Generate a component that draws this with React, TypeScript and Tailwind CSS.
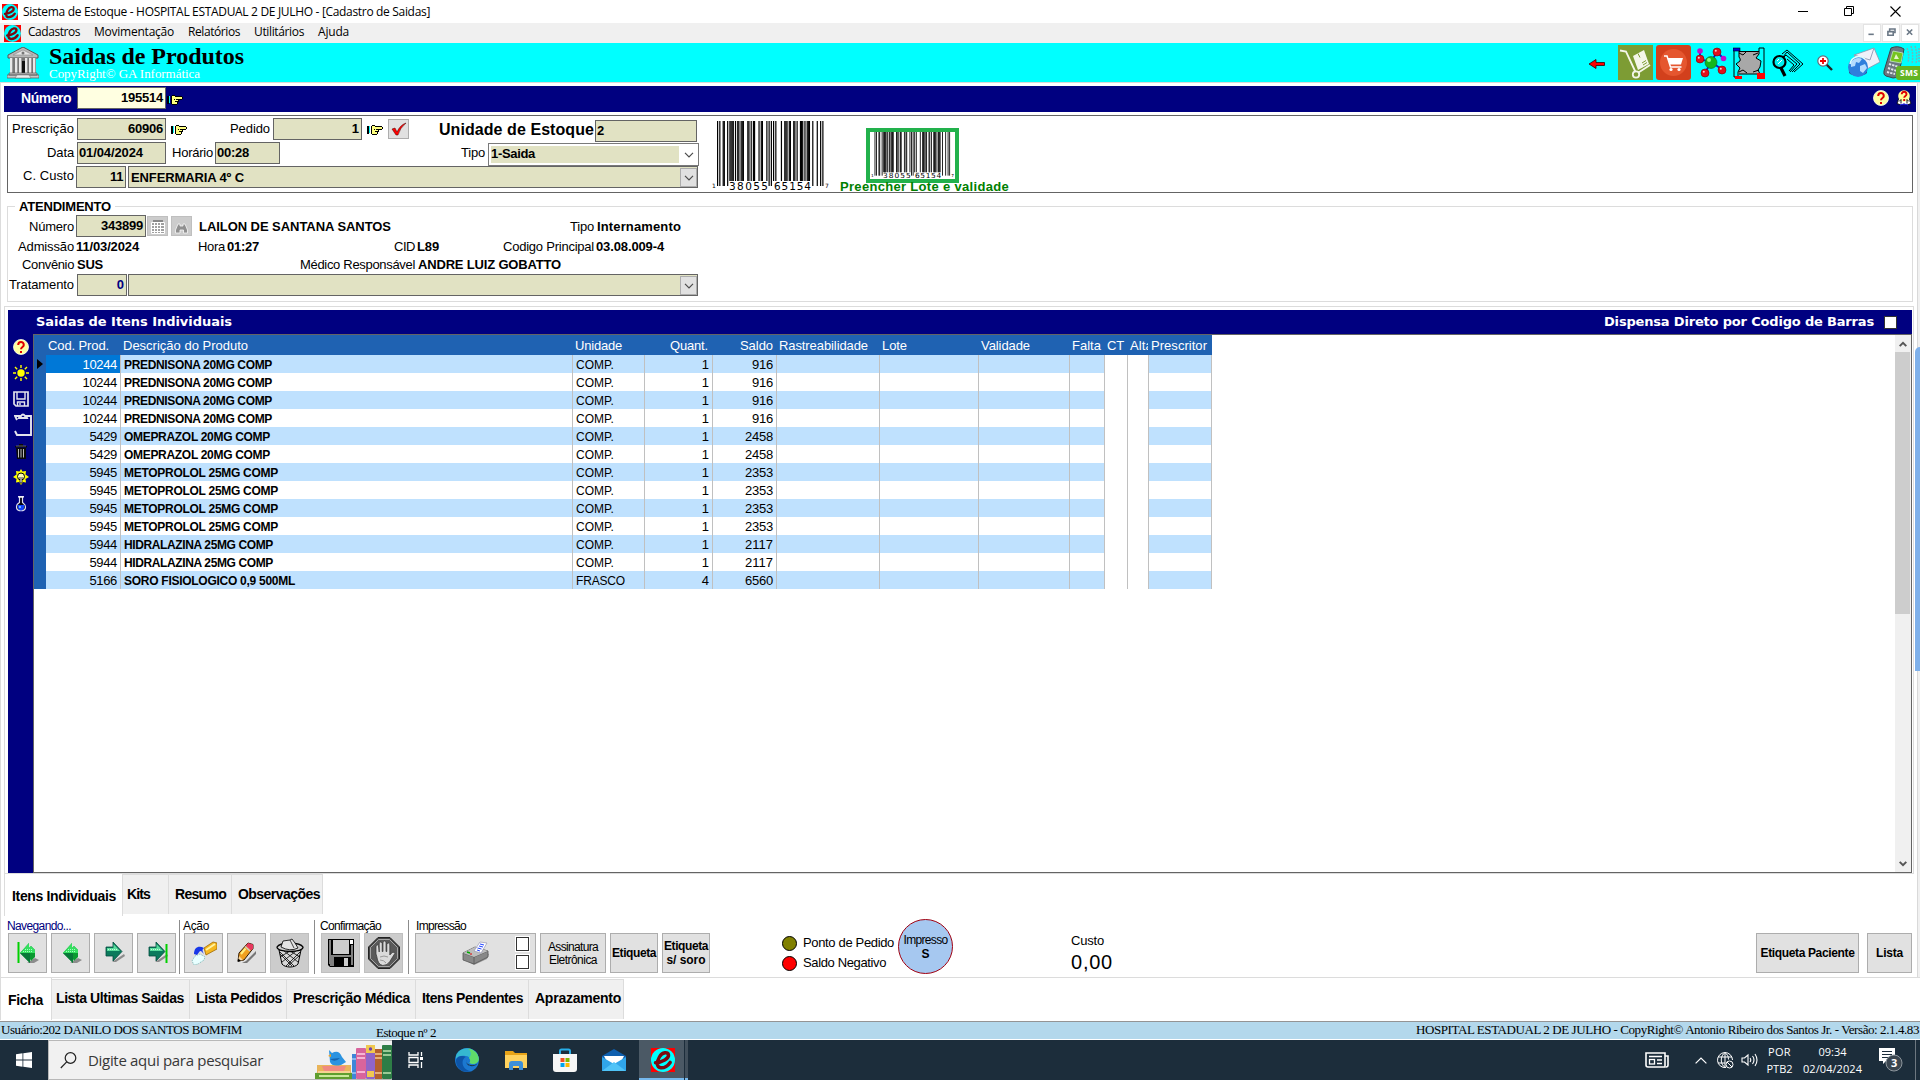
import React, { useLayoutEffect, useRef, useState } from "react";

type TProps = { w?: number; className?: string; children: string };

/** Single line of text whose letter spacing is adjusted so that it spans `w` pixels. */
function T({ w, className = "", children }: TProps) {
  const ref = useRef<HTMLSpanElement>(null);
  const [spacing, setSpacing] = useState(0);
  useLayoutEffect(() => {
    if (!w || !ref.current) return;
    const natural = ref.current.getBoundingClientRect().width;
    setSpacing((w - natural) / children.length);
  }, []);
  return (
    <span ref={ref} className={`inline-block shrink-0 whitespace-nowrap ${className}`} style={{ letterSpacing: spacing }}>
      {children}
    </span>
  );
}

/* ---------- icons ---------- */

function AppLogo({ className }: { className: string }) {
  return (
    <svg viewBox="0 0 16 16" className={`shrink-0 ${className}`}>
      <rect width="16" height="16" fill="#f00" />
      <circle cx="8" cy="8" r="8" fill="#0ff" />
      <path d="M3 9.800C7.600 9.400 12 7 11.700 4.600 11.400 2.400 7.600 2.600 5.600 6 3.600 9.400 3.600 13 6.600 13.200c2.200.1 4.600-1.300 6.200-3.600" fill="none" stroke="#7a0a10" strokeWidth="2.300" strokeLinecap="round" />
    </svg>
  );
}

function Hand({ className = "" }: { className?: string }) {
  return (
    <svg viewBox="0 0 16 10" className={`h-[10px] w-4 shrink-0 ${className}`} shapeRendering="crispEdges">
      <path d="M5 1h3v1h7v2h-4v4h-1v1H5z" fill="#ffff80" />
      <path d="M0 1h2v8H0zM4 1h1v8H4zM5 0h3v1H5zM8 1h7v1H8zM15 2h1v2h-1zM9 4h6v1H9zM11 5h1v2h-1zM10 7h1v2h-1zM5 9h5v1H5zM7 4h1v1H7zM8 6h3v1H8z" fill="#000" />
      <rect x="2" y="1" width="1" height="7" fill="#0ff" />
    </svg>
  );
}

function Bank() {
  return (
    <svg viewBox="0 0 32 32" className="h-8 w-8 shrink-0">
      <path d="M16 0 31 8v3H1V8z" fill="#b8b8b8" stroke="#555" />
      <path d="M16 3 26 8H6z" fill="#e6e6e6" stroke="#888" strokeWidth=".6" />
      <circle cx="16" cy="6" r="1.500" fill="#777" />
      <rect x="3" y="11" width="26" height="16" fill="#777" />
      <rect x="14" y="14" width="4" height="12" fill="#111" />
      {[3, 8, 12, 18, 22, 26].map((x) => (
        <g key={x}>
          <rect x={x} y="11" width="3" height="16" fill="#e8e8e8" />
          <rect x={x + 2} y="11" width="1" height="16" fill="#999" />
        </g>
      ))}
      <path d="M2 26h28v2H2zM0 28h32v3H0z" fill="#c9c9c9" stroke="#555" strokeWidth=".7" />
      <path d="M10 28h12l2 3H8z" fill="#eee" stroke="#666" strokeWidth=".5" />
    </svg>
  );
}

function HelpBall() {
  return (
    <svg viewBox="0 0 16 16" className="h-4 w-4 shrink-0">
      <circle cx="8" cy="8" r="7.500" fill="#ffffa0" stroke="#ffe" strokeWidth=".8" />
      <path d="M5.200 6c0-4 5.600-4 5.600 0 0 2-2.800 2-2.800 4.300M8 12v2" fill="none" stroke="#e00000" strokeWidth="2" />
    </svg>
  );
}

function HelpReader() {
  return (
    <svg viewBox="0 0 16 16" className="h-4 w-4 shrink-0">
      <path d="M1 13.500 3 8h10l2 5.500-4 1.500-3-1-3 1z" fill="#fff" stroke="#000" strokeWidth=".8" />
      <path d="M4 15l4-1 4 1" stroke="#22f" fill="none" />
      <circle cx="8" cy="6" r="5.800" fill="#ffff9a" />
      <path d="M3 11.500l2-2v4M13 11.500l-2-2v4" stroke="#000" fill="none" strokeWidth=".9" />
      <path d="M5.700 4.300c0-3.500 4.800-3.500 4.800 0 0 1.800-2.300 1.600-2.300 3.500M8.200 9v2" fill="none" stroke="#e00000" strokeWidth="1.900" />
    </svg>
  );
}

function Chevron({ className = "" }: { className?: string }) {
  return (
    <svg viewBox="0 0 10 6" className={`h-[6px] w-[10px] shrink-0 ${className}`}>
      <path d="M1 .8 5 4.800 9 .8" fill="none" stroke="#4c4c4c" strokeWidth="1.200" />
    </svg>
  );
}

function ScrollArrow({ className = "" }: { className?: string }) {
  return (
    <svg viewBox="0 0 8 6" className={`h-[6px] w-2 shrink-0 ${className}`}>
      <path d="M.7.9 4 4.200 7.300.9" fill="none" stroke="#555" strokeWidth="2" />
    </svg>
  );
}

function CyanIcons() {
  return (
    <div className="flex h-full items-center">
      <svg viewBox="0 0 16 10" className="mt-[2px] mr-[13px] h-[10px] w-4">
        <path d="M0 5 7 .5V3.500h8.500v3H7V9.500z" fill="#f00" stroke="#300" strokeWidth=".8" />
      </svg>
      <svg viewBox="0 0 35 35" className="mr-[3px] h-[35px] w-[35px]">
        <rect width="35" height="35" fill="#7d9c34" />
        <path d="M2 5.500l6 1 9.500 20.500" fill="none" stroke="#f4f6e8" strokeWidth="1.800" />
        <circle cx="18" cy="29.500" r="3.200" fill="none" stroke="#f4f6e8" strokeWidth="1.800" />
        <path d="M20.500 27.500 32 20" stroke="#f4f6e8" strokeWidth="1.800" />
        <path d="M15 11 26 5l5 14-11 6z" fill="#f4f6e8" />
        <path d="M20 8.500l2 4M24 18l4-2.500M25 20l4-2.500" stroke="#7d9c34" strokeWidth="1" />
      </svg>
      <svg viewBox="0 0 35 35" className="mr-[5px] h-[35px] w-[35px]">
        <rect width="35" height="35" rx="3" fill="#d2401c" />
        <circle cx="17.500" cy="17.500" r="13.500" fill="#e5562f" />
        <path d="M8 11h3l3.500 11h11" fill="none" stroke="#fff" strokeWidth="1.500" />
        <path d="M11.500 13H27l-2 6.500H14z" fill="#fff" />
        <circle cx="15" cy="24.500" r="1.600" fill="#fff" />
        <circle cx="23" cy="24.500" r="1.600" fill="#fff" />
      </svg>
      <svg viewBox="0 0 31 31" className="mr-[6px] h-[31px] w-[31px]">
        <path d="M4 4v8l11 3 6-10 7 7M15 15l-6 11M15 15l12 8" fill="none" stroke="#11c" strokeWidth="1.800" />
        <circle cx="15" cy="15.500" r="6" fill="#13b71c" stroke="#063" strokeWidth=".6" />
        <circle cx="13" cy="13" r="2" fill="#8f8" />
        <circle cx="4" cy="4" r="2.800" fill="#c010c8" />
        <circle cx="27.500" cy="11.500" r="2.800" fill="#c010c8" />
        {[[4, 12], [21, 5], [9, 26], [26, 23]].map(([x, y]) => (
          <g key={x}>
            <circle cx={x} cy={y} r="4" fill="#e0101c" stroke="#700" strokeWidth=".6" />
            <circle cx={x - 1.200} cy={y - 1.200} r="1" fill="#fcc" />
          </g>
        ))}
      </svg>
      <svg viewBox="0 0 32 32" className="mr-[7px] h-8 w-8">
        <path d="M5 5h22v22H5z" fill="#a8a8a8" />
        <path d="M6 4.500h20M6 27h20" stroke="#000" />
        <path d="M1 3h5v7q2 2 1 4l-4 3 4 4-2 4v5H1zM31 1h-5v6l-3 4 5 3-1 6-2 3 2 4h4z" fill="#0ff" stroke="#000" />
        <path d="M6 6l4 2 3-3M6 25l4-2 4 3M25 6l-5 2M20 25l6-2" fill="none" stroke="#000" />
        <rect x="0" y="1" width="7" height="3" fill="#0000d8" stroke="#000" strokeWidth=".6" />
        <path d="M2 29h7v3H2zM24 26h8v6h-8z" fill="#f00" />
      </svg>
      <svg viewBox="0 0 32 28" className="mr-[13px] h-7 w-8">
        <path d="M10 5l5-4 16 14-9 8M11 8l4-5 13 12-8 8M11 9l3-3 11 9-7 8M15 10l7 6-5 6" fill="none" stroke="#000" strokeWidth="1" />
        <circle cx="7.500" cy="13" r="6" fill="#0ee" stroke="#000" strokeWidth="2.200" />
        <path d="M5 12l2-2M6 15l4-4" stroke="#fff" />
        <path d="M9 19l4 8" stroke="#000" strokeWidth="3.200" />
      </svg>
      <svg viewBox="0 0 16 16" className="mr-[14px] h-4 w-4">
        <path d="M9.500 9.500l5.500 5.500" stroke="#222" strokeWidth="2.400" />
        <circle cx="6" cy="6" r="5.200" fill="#fff" stroke="#667" strokeWidth="1.200" />
        <path d="M6 3v6M3 6h6" stroke="#e00" strokeWidth="1.800" />
      </svg>
      <svg viewBox="0 0 33 32" className="mr-[3px] h-8 w-[33px]">
        <path d="M7 8 27 1l6 14-15 8z" fill="#eef1fa" stroke="#8a93ad" strokeWidth=".8" />
        <path d="M7 8l16 5 4-12" fill="none" stroke="#9aa3bd" />
        <path d="M2 22v4a10 5 0 0018 0v-4z" fill="#2f4d8d" />
        <circle cx="11" cy="20" r="10" fill="#2f7fdc" />
        <path d="M4 15c3-4 8-5 11-3l-3 4-3-1-1 4-4 1zM13 19l5-2 2 4-4 5-3-2z" fill="#b4dcff" />
        <path d="M3 17a9 9 0 0115-5" fill="none" stroke="#dff" strokeWidth="1.500" />
      </svg>
      <svg viewBox="0 0 37 35" className="h-[35px] w-[37px]">
        <path d="M24 3c2 5 2 9 1 15M28 1c2 6 2 12 1 18M32 1c2 6 2 12 1 18M36 3v14" fill="none" stroke="#6fb8bb" strokeWidth="1.500" strokeDasharray="2 1" />
        <path d="M8 3q7-3 13 1l-5 24q-1 5-6 5l-7-2q-3-1-2-5z" fill="#6b7780" stroke="#3a444b" />
        <path d="M10 6l10 2-2 10-11-2z" fill="#76c420" stroke="#dfe" strokeWidth=".6" />
        <path d="M13 9l3 5h-5z" fill="#e6f7c8" />
        <path d="M6 19l10 3M5 23l9 3M4 27l8 2" stroke="#e3e8ec" strokeWidth="1.900" strokeDasharray="2.300 1" />
        <rect x="13" y="21" width="26" height="14" rx="3" fill="#62b422" />
        <text x="17" y="31" fontSize="8.500" fontWeight="700" fill="#fff" fontFamily="Open Sans, sans-serif" textLength="18">SMS</text>
      </svg>
    </div>
  );
}

const UPC_LEFT: Record<string, string> = {
  "0": "0001101", "1": "0011001", "2": "0010011", "3": "0111101", "4": "0100011",
  "5": "0110001", "6": "0101111", "7": "0111011", "8": "0110111", "9": "0001011",
};

function Barcode({ className }: { className: string }) {
  const left = "138055".split("").map((d) => UPC_LEFT[d]).join("");
  const right = "651547".split("").map((d) => UPC_LEFT[d].replace(/[01]/g, (b) => (b === "1" ? "0" : "1"))).join("");
  const bits = "101" + left + "01010" + right + "101";
  return (
    <svg viewBox="0 0 117 70" preserveAspectRatio="none" className={`shrink-0 overflow-visible ${className}`}>
      {bits.split("").map((b, i) => {
        if (b === "0") return null;
        const long = i < 10 || i > 84 || (i > 44 && i < 50);
        return <rect key={i} x={5 + i * 1.120} y="0" width="1.200" height={long ? 65 : 60} fill="#000" />;
      })}
      <g fontFamily="DejaVu Sans, sans-serif" fill="#000" fontSize="10.500">
        <text x="0" y="67" fontSize="6">1</text>
        <text x="17" y="69" textLength="39">38055</text>
        <text x="62" y="69" textLength="37">65154</text>
        <text x="113" y="67" fontSize="6">7</text>
      </g>
    </svg>
  );
}

/* ---------- form pieces ---------- */

const label = "text-[13px] leading-4";
const bold = "text-[13px] font-bold leading-4";

function Field({ value, w, className = "" }: { value: string; w?: number; className?: string }) {
  return (
    <div className={`flex h-[22px] shrink-0 border border-[#646464] bg-[#e1e2c3] pt-[2px] pr-[2px] pl-[1px] ${className}`}>
      {value ? <T w={w} className={bold}>{value}</T> : null}
    </div>
  );
}

function Header() {
  return (
    <>
      <div className="flex h-[23px] items-center bg-white pl-[2px] text-black">
        <AppLogo className="h-4 w-4" />
        <T w={407} className="ml-[5px] font-['Open_Sans',sans-serif] text-[12px]">Sistema de Estoque - HOSPITAL ESTADUAL 2 DE JULHO - [Cadastro de Saidas]</T>
        <div className="mr-[19px] ml-auto flex items-center gap-[35px]">
          <svg viewBox="0 0 11 11" className="h-[11px] w-[11px]"><path d="M0 5.500h10" stroke="#000" /></svg>
          <svg viewBox="0 0 11 11" className="h-[11px] w-[11px]"><path d="M.5 2.500h7v7h-7zM2.500 2.500v-2h7v7h-2" fill="none" stroke="#000" /></svg>
          <svg viewBox="0 0 11 11" className="h-[11px] w-[11px]"><path d="M.5.5l10 10M10.500.5l-10 10" stroke="#000" strokeWidth="1.100" /></svg>
        </div>
      </div>
      <div className="flex h-5 items-center bg-[#f0f0f0] pl-1 font-['Open_Sans',sans-serif] text-[12px]">
        <AppLogo className="h-[17px] w-[17px]" />
        <T w={52} className="-mt-[2px] ml-[7px]">Cadastros</T>
        <T w={80} className="-mt-[2px] ml-[14px]">Movimentação</T>
        <T w={52} className="-mt-[2px] ml-[14px]">Relatórios</T>
        <T w={50} className="-mt-[2px] ml-[14px]">Utilitários</T>
        <T w={31} className="-mt-[2px] ml-[14px]">Ajuda</T>
        <div className="mr-[1px] ml-auto flex gap-[1px]">
          {["M5 10.500h6", "M5.500 7.500h6v4h-6zM7.500 7V4.500h6v4H12", "M5.500 5l6 6M11.500 5l-6 6"].map((d) => (
            <svg key={d} viewBox="0 0 18 18" className="h-[18px] w-[18px] border border-[#e3e3e3] bg-white">
              <path d={d} fill="none" stroke="#6b7886" strokeWidth="1.800" />
            </svg>
          ))}
        </div>
      </div>
      <div className="flex h-[39px] bg-[#00ffff] pl-[7px]">
        <div className="pt-[4px]"><Bank /></div>
        <div className="ml-[10px] flex flex-col items-start font-['Liberation_Serif',serif]">
          <T w={195} className="text-[24px] leading-[26px] font-bold">Saidas de Produtos</T>
          <T w={151} className="-mt-[2px] text-[13px] leading-[14px] text-white">CopyRight© GA Informática</T>
        </div>
        <div className="ml-auto"><CyanIcons /></div>
      </div>
    </>
  );
}

function NumberBar() {
  return (
    <div className="mr-1 ml-1 flex h-[26px] bg-[#000080] pl-[17px]">
      <T w={50} className="mt-[4px] text-[14px] leading-4 font-bold text-white">Número</T>
      <div className="mt-[1px] ml-[6px] flex h-[22px] w-[89px] justify-end border border-[#646464] bg-[#ffffe1] pt-[2px] pr-[2px]">
        <T w={42} className={bold}>195514</T>
      </div>
      <Hand className="mt-[9px] ml-[1px]" />
      <div className="mt-[4px] mr-1 ml-auto flex gap-[7px]"><HelpBall /><HelpReader /></div>
    </div>
  );
}

function OrderBox() {
  return (
    <div className="mt-[3px] mr-[7px] ml-[7px] flex h-[78px] border border-[#646464] pt-[2px]">
      <div className="w-[692px] shrink-0">
        <div className="flex h-6">
          <div className="mt-[3px] mr-[3px] flex w-[66px] justify-end"><T w={62} className={label}>Prescrição</T></div>
          <Field value="60906" w={35} className="w-[89px] justify-end" />
          <Hand className="mt-[7px] ml-[5px]" />
          <T w={40} className={`mt-[3px] ml-[43px] ${label}`}>Pedido</T>
          <Field value="1" className="ml-[3px] w-[89px] justify-end" />
          <Hand className="mt-[7px] ml-[5px]" />
          <div className="mt-[1px] ml-[5px] flex h-5 w-[21px] items-center justify-center border border-[#adadad] bg-[#e1e1e1]">
            <svg viewBox="0 0 16 14" className="h-[14px] w-4"><path d="M1 7l3-1 2 4Q9 3 15 1 9 6 7 13H5z" fill="#f00" stroke="#400" strokeWidth=".5" /></svg>
          </div>
          <T w={155} className="mt-[3px] ml-[30px] text-[16px] leading-[18px] font-bold">Unidade de Estoque</T>
          <Field value="2" className="mt-[2px] ml-[1px] w-[102px]" />
        </div>
        <div className="flex h-6">
          <div className="mt-[3px] mr-[3px] flex w-[66px] justify-end"><T w={27} className={label}>Data</T></div>
          <Field value="01/04/2024" w={64} className="w-[89px]" />
          <T w={41} className={`mt-[3px] ml-[6px] ${label}`}>Horário</T>
          <Field value="00:28" w={32} className="ml-[2px] w-[65px]" />
          <T w={24} className={`mt-[3px] ml-[181px] ${label}`}>Tipo</T>
          <div className="mt-[1px] ml-[3px] flex h-[23px] w-[211px] border border-[#7a7a7a] bg-white p-[2px]">
            <div className="flex h-[17px] w-[188px] bg-[#e1e2c3]"><T w={44} className={bold}>1-Saida</T></div>
            <Chevron className="mt-[6px] ml-[5px]" />
          </div>
        </div>
        <div className="flex h-6">
          <div className="mt-[2px] mr-[2px] flex w-[66px] justify-end"><T w={51} className={label}>C. Custo</T></div>
          <Field value="11" w={13} className="w-[50px] justify-end" />
          <div className="ml-[2px] flex h-[22px] w-[570px] border border-[#646464] bg-[#e1e2c3] pt-[3px] pl-[2px]">
            <T w={113} className={bold}>ENFERMARIA 4º C</T>
            <div className="-mt-[2px] ml-auto flex h-[19px] w-[17px] items-center justify-center border border-[#adadad] bg-[#e1e1e1]"><Chevron /></div>
          </div>
        </div>
      </div>
      <Barcode className="mt-[3px] ml-[12px] h-[70px] w-[117px]" />
      <div className="ml-[11px] flex flex-col items-start pt-[10px]">
        <div className="ml-[26px] flex h-[55px] w-[93px] justify-center border-4 border-[#22b14c] bg-white">
          <Barcode className="h-[47px] w-[83px]" />
        </div>
        <T w={169} className="relative -mt-[4px] text-[13px] leading-4 font-bold text-[#008000]">Preencher Lote e validade</T>
      </div>
    </div>
  );
}

function Attendance() {
  return (
    <fieldset className="mt-[5px] mr-[7px] ml-[7px] h-[104px] min-w-0 border border-[#dcdcdc]">
      <legend className="ml-[7px] px-1 leading-[16px]"><T w={92} className={bold}>ATENDIMENTO</T></legend>
      <div className="flex h-6">
        <div className="mt-[4px] mr-[2px] flex w-[66px] justify-end"><T w={45} className={label}>Número</T></div>
        <Field value="343899" w={42} className="w-[70px] justify-end" />
        <div className="mt-[1px] ml-[1px] flex h-5 w-[21px] items-center justify-center border border-[#bfbfbf] bg-[#ccc]">
          <svg viewBox="0 0 16 15" className="h-[15px] w-4">
            <path d="M1.500 3.500h13v11h-13zM1.500 6.500h13M1.500 9.500h13M1.500 12.500h13M4.500 3v11M7.500 3v11M10.500 3v11" fill="#a0a0a0" stroke="#fff" strokeWidth="1" />
            <path d="M3 1h10v2H3z" fill="#888" />
          </svg>
        </div>
        <div className="mt-[1px] ml-[3px] flex h-5 w-[21px] items-end justify-center border border-[#bfbfbf] bg-[#ccc] pb-[1px]">
          <svg viewBox="0 0 13 11" className="h-[11px] w-[13px]">
            <path d="M3 1h2v2h3V1h2l2.500 6v3h-4V7H5v3H.5V7z" fill="#909090" stroke="#f8f8f8" strokeWidth=".8" />
          </svg>
        </div>
        <T w={192} className={`${bold} mt-[4px] ml-[7px]`}>LAILON DE SANTANA SANTOS</T>
        <T w={24} className={`${label} mt-[4px] ml-[179px]`}>Tipo</T>
        <T w={84} className={`${bold} mt-[4px] ml-[3px]`}>Internamento</T>
      </div>
      <div className="flex h-[17px]">
        <div className="mr-[2px] flex w-[66px] justify-end"><T w={56} className={label}>Admissão</T></div>
        <T w={63} className={bold}>11/03/2024</T>
        <T w={27} className={`${label} ml-[59px]`}>Hora</T>
        <T w={32} className={`${bold} ml-[2px]`}>01:27</T>
        <T w={21} className={`${label} ml-[135px]`}>CID</T>
        <T w={22} className={`${bold} ml-[2px]`}>L89</T>
        <T w={91} className={`${label} ml-[64px]`}>Codigo Principal</T>
        <T w={68} className={`${bold} ml-[2px]`}>03.08.009-4</T>
      </div>
      <div className="flex h-[19px] pt-[1px]">
        <div className="mr-[3px] flex w-[66px] justify-end"><T w={52} className={label}>Convênio</T></div>
        <T w={26} className={bold}>SUS</T>
        <T w={115} className={`${label} ml-[197px]`}>Médico Responsável</T>
        <T w={143} className={`${bold} ml-[3px]`}>ANDRE LUIZ GOBATTO</T>
      </div>
      <div className="-mt-[1px] flex h-6">
        <div className="mt-[3px] mr-[3px] flex w-[66px] justify-end"><T w={65} className={label}>Tratamento</T></div>
        <Field value="0" className="w-[50px] justify-end text-[#000080]" />
        <div className="ml-[1px] flex h-[22px] w-[570px] justify-end border border-[#646464] bg-[#e1e2c3] pt-[1px]">
          <div className="flex h-[19px] w-[17px] items-center justify-center border border-[#adadad] bg-[#e1e1e1]"><Chevron /></div>
        </div>
      </div>
    </fieldset>
  );
}

/* ---------- grid ---------- */

type Item = { cod: string; name: string; w: number; unit: string; qty: string; saldo: string };

const item = (cod: string, name: string, w: number, unit: string, qty: string, saldo: string): Item => ({ cod, name, w, unit, qty, saldo });

const items: Item[] = [
  ...Array.from({ length: 4 }, () => item("10244", "PREDNISONA 20MG COMP", 148, "COMP.", "1", "916")),
  ...Array.from({ length: 2 }, () => item("5429", "OMEPRAZOL 20MG COMP", 146, "COMP.", "1", "2458")),
  ...Array.from({ length: 4 }, () => item("5945", "METOPROLOL 25MG COMP", 154, "COMP.", "1", "2353")),
  ...Array.from({ length: 2 }, () => item("5944", "HIDRALAZINA 25MG COMP", 149, "COMP.", "1", "2117")),
  item("5166", "SORO FISIOLOGICO 0,9 500ML", 171, "FRASCO", "4", "6560"),
];

const cols = "grid grid-cols-[12px_75px_452px_72px_68px_64px_103px_99px_91px_35px_23px_21px_63px]";
const line = "border-r border-[#c0c0c0]";

function SideIcons() {
  return (
    <div className="flex w-[25px] shrink-0 flex-col items-center bg-[#000080] pt-[5px]">
      <HelpBall />
      <svg viewBox="0 0 16 16" className="mt-[10px] h-4 w-4">
        <circle cx="8" cy="8" r="3.700" fill="#ff0" />
        <path d="M8 0v3M8 13v3M0 8h3M13 8h3M2 2l2.200 2.200M11.800 11.800 14 14M2 14l2.200-2.200M11.800 4.200 14 2" stroke="#ff0" strokeWidth="1.400" />
      </svg>
      <svg viewBox="0 0 16 16" className="mt-[10px] h-4 w-4">
        <path d="M1 1h14v14H3l-2-2z" fill="none" stroke="#e4e4ec" strokeWidth="1.700" />
        <path d="M4 1v7h8V1M4.500 15v-4h7v4M7 12v2" fill="none" stroke="#e4e4ec" strokeWidth="1.400" />
      </svg>
      <svg viewBox="0 0 18 24" className="mt-[6px] ml-1 h-[24px] w-[18px]">
        <path d="M6 3H1l2 4M12 3h5v19H3l-2-4M5 5l1-2h1q2-3 4 0h1l1 2z" fill="none" stroke="#e4e4ec" strokeWidth="1.900" />
      </svg>
      <svg viewBox="0 0 14 17" className="mt-[6px] h-[17px] w-[14px]">
        <path d="M1 3h12v1.500H1zM5 1h4v2H5zM2 5h10v11H3z" fill="#0a0a0a" />
        <path d="M2 3h10" stroke="#777" strokeWidth=".8" />
        <path d="M4.500 6v8.500M7 6v8.500M9.500 6v8.500" stroke="#bbb" strokeWidth="1" />
      </svg>
      <svg viewBox="0 0 16 16" className="mt-[9px] h-4 w-4">
        <path d="M8 0l1.500 2.500L13 2l-.5 3.500L16 8l-3.500 2L13 13.500 10 13l-2 3-2-3-3 .5.5-3.500L0 8l3.500-2.500L3 2l3.500.5z" fill="#ff0" />
        <circle cx="8" cy="7.500" r="3.500" fill="#ffffb0" stroke="#000" strokeWidth="1" />
        <path d="M7 8v6h2V8" fill="#fff" stroke="#000" strokeWidth=".8" />
      </svg>
      <svg viewBox="0 0 12 16" className="mt-[11px] h-4 w-3">
        <path d="M4.500 1v5.500Q1.500 8 1.500 11c0 5 9 5 9 0 0-3-2-3.500-3-4.500V1z" fill="#001" stroke="#dde" strokeWidth="1.200" />
        <path d="M3 .8h6" stroke="#fff" strokeWidth="1.400" />
        <path d="M2.500 9h7q0 5.500-3.500 5.500T2.500 9" fill="#14f" />
        <path d="M4 11h2" stroke="#8df" strokeWidth="1.300" />
      </svg>
    </div>
  );
}

function ItemsGrid() {
  const heads: [string, number, string][] = [
    ["", 0, ""], ["Cod. Prod.", 61, "pl-[2px]"], ["Descrição do Produto", 125, "pl-[2px]"], ["Unidade", 47, "pl-[2px]"],
    ["Quant.", 38, "justify-end pr-[5px]"], ["Saldo", 33, "justify-end pr-[4px]"], ["Rastreabilidade", 89, "pl-[2px]"], ["Lote", 25, "pl-[2px]"],
    ["Validade", 49, "pl-[2px]"], ["Falta", 29, "pl-[2px]"], ["CT", 17, "pl-[2px]"], ["Alta", 23, "mr-[1px] overflow-hidden pl-[2px]"], ["Prescritor", 56, "pl-[2px]"],
  ];
  return (
    <div className="mr-[6px] ml-1 border border-b-0 border-[#dcdcdc] pt-[3px] pr-[1px] pl-[3px]">
      <div className="flex h-6 items-center bg-[#000080] pr-[15px] pl-7 font-['DejaVu_Sans',sans-serif] text-[13px] font-bold text-white">
        <T w={196} className="leading-[24px]">Saidas de Itens Individuais</T>
        <T w={270} className="ml-auto">Dispensa Direto por Codigo de Barras</T>
        <div className="ml-[10px] h-[13px] w-[13px] border border-[#333] bg-white" />
      </div>
      <div className="flex h-[539px]">
        <SideIcons />
        <div className="flex min-w-0 flex-1 border border-[#646464]">
          <div className="text-[13px]">
            <div className={`${cols} h-5 bg-[#1f62b2] text-white`}>
              {heads.map(([h, w, c], i) => (
                <div key={i} className={`flex h-5 min-w-0 items-start ${c}`}>{h ? <T w={w} className="leading-[22px]">{h}</T> : null}</div>
              ))}
            </div>
            {items.map((r, i) => {
              const stripe = i % 2 === 0 ? "bg-[#bfe1fe]" : "bg-white";
              return (
                <div key={i} className={`${cols} h-[18px] leading-[20px]`}>
                  <div className="bg-[#1f62b2]">
                    {i === 0 && <svg viewBox="0 0 6 10" className="mt-1 ml-[3px] h-[10px] w-[6px]"><path d="M0 0l6 5-6 5z" fill="#000" /></svg>}
                  </div>
                  <div className={`flex h-[18px] justify-end pr-[3px] ${line} ${i === 0 ? "bg-[#0078d7] text-white" : stripe}`}><T w={r.cod.length * 6.900}>{r.cod}</T></div>
                  <div className={`${line} flex h-[18px] pl-[3px] font-bold ${stripe}`}><T w={r.w} className="text-[12px]">{r.name}</T></div>
                  <div className={`${line} flex h-[18px] pl-[3px] ${stripe}`}><T w={r.unit === "FRASCO" ? 49 : 38} className="text-[12px]">{r.unit}</T></div>
                  <div className={`${line} flex h-[18px] justify-end pr-[3px] ${stripe}`}>{r.qty}</div>
                  <div className={`${line} flex h-[18px] justify-end pr-[3px] ${stripe}`}><T w={r.saldo.length * 7}>{r.saldo}</T></div>
                  <div className={`${line} ${stripe}`} />
                  <div className={`${line} ${stripe}`} />
                  <div className={`${line} ${stripe}`} />
                  <div className={`${line} ${stripe}`} />
                  <div className={line} />
                  <div className={line} />
                  <div className={`${line} ${stripe}`} />
                </div>
              );
            })}
          </div>
          <div className="ml-auto flex w-4 flex-col items-center bg-[#f0f0f0]">
            <div className="flex h-[17px] items-center"><ScrollArrow className="rotate-180" /></div>
            <div className="mr-[1px] h-[262px] w-[15px] bg-[#cdcdcd]" />
            <div className="mt-auto flex h-[17px] items-center"><ScrollArrow /></div>
          </div>
        </div>
      </div>
    </div>
  );
}

/* ---------- tabs and tool bar ---------- */

function InnerTabs() {
  const tab = "flex h-10 items-start border-t border-r border-[#dcdcdc] bg-[#f0f0f0] pt-[11px]";
  return (
    <div className="mr-[6px] ml-1 flex h-[45px] items-start border-t border-[#dcdcdc] text-[14px] leading-4 font-bold">
      <div className="flex h-[42px] w-[119px] items-start border-r border-l border-[#dcdcdc] pt-[14px] pl-[7px]"><T w={104}>Itens Individuais</T></div>
      <div className={`${tab} w-[46px] pl-[4px]`}><T w={23}>Kits</T></div>
      <div className={`${tab} w-[63px] pl-[6px]`}><T w={51}>Resumo</T></div>
      <div className={`${tab} w-[91px] pl-[6px]`}><T w={82}>Observações</T></div>
    </div>
  );
}

function Btn({ w, off = false, children }: { w: string; off?: boolean; children: React.ReactNode }) {
  return (
    <div className={`flex h-10 shrink-0 items-center justify-center border ${off ? "border-[#bfbfbf] bg-[#ccc]" : "border-[#adadad] bg-[#e1e1e1]"} ${w}`}>
      {children}
    </div>
  );
}

function Nav({ d, bar }: { d: "l" | "r"; bar?: boolean }) {
  return (
    <svg viewBox="0 0 24 24" className="h-6 w-6">
      {d === "l" ? (
        <>
          <path d="M11 22l8-5 4 2-5 3z" fill="#8c8c8c" />
          <path d="M4 12 13 2v5l2-2 4 4v7l-4 4-1-2v4z" fill="#0a9a30" />
          <path d="M4 12 13 2v5l2-2 4 4v3z" fill="#35e060" />
          <path d="M4 12h10v10z" fill="#087838" />
          <path d="M7 10.500h10M9 8.500h8" stroke="#a0ffc0" strokeDasharray="1 1" />
          {bar && <path d="M2.500 1v21" stroke="#00d000" strokeWidth="2" />}
        </>
      ) : (
        <>
          <path d="M10 21l12-8 1 2-9 6z" fill="#8c8c8c" />
          <path d="M20 10.500 11 1v5H4v9h7v5z" fill="#0a7a5c" stroke="#044c40" strokeWidth=".8" />
          <path d="M18 10 11.500 3v4H5v3z" fill="#58dc9c" />
          <path d="M6 8.500h9" stroke="#c0ffd8" strokeDasharray="1 1" />
          {bar && <path d="M21.500 3v19" stroke="#00d000" strokeWidth="2" />}
        </>
      )}
    </svg>
  );
}

function Group({ title, w, children }: { title: string; w: number; children: React.ReactNode }) {
  return (
    <div className="flex flex-col">
      <T w={w} className={`h-[15px] self-start text-[12px] leading-[16px] ${title === "Navegando..." ? "-ml-[1px] text-[#000080]" : title === "Impressão" ? "ml-[1px]" : "-ml-[1px]"}`}>{title}</T>
      <div className="flex gap-[4px]">{children}</div>
    </div>
  );
}

function ToolBar() {
  const sep = "mt-[2px] h-[54px] w-px shrink-0 bg-[#8c8c8c]";
  return (
    <div className="flex h-[59px] items-start pl-2">
      <Group title="Navegando..." w={64}>
        <Btn w="w-[39px]"><Nav d="l" bar /></Btn>
        <Btn w="w-[39px]"><Nav d="l" /></Btn>
        <Btn w="w-[39px]"><Nav d="r" /></Btn>
        <Btn w="w-[39px]"><Nav d="r" bar /></Btn>
      </Group>
      <div className={`${sep} mr-1 ml-[3px]`} />
      <Group title="Ação" w={26}>
        <Btn w="w-[39px]">
          <svg viewBox="0 0 26 24" className="h-6 w-[26px]">
            <path d="M13 7 22 1l4 1v6L15 14z" fill="#f5b820" stroke="#a06800" strokeWidth=".8" />
            <path d="M15 9l9-6" stroke="#fff3a0" strokeWidth="2" />
            <path d="M3 13C3 6 8 4 13 7c-2 1-2 3 0 6l-3-3c-2 0-2 2-4 4z" fill="#1838e8" />
            <path d="M1 20l3-5 5-2 5 3-1 3-6 4-4 1z" fill="#e8ffff" stroke="#6aa" strokeWidth=".8" strokeDasharray="1 1" />
          </svg>
        </Btn>
        <Btn w="w-[39px]">
          <svg viewBox="0 0 22 22" className="h-[22px] w-[22px]">
            <path d="M10 19 20 9v3l-9 9H6z" fill="#777" />
            <path d="M2 19l1-8L12 1l5 1.500v4L8 18z" fill="#f0a020" stroke="#301800" strokeWidth="1" />
            <path d="M12 1l5 1.500v4l-2 2-5-4.500z" fill="#e83860" />
            <path d="M9 4.500l5 4.500" stroke="#ccc" strokeWidth="1.300" />
            <path d="M5 12l4.500-5.500" stroke="#fff080" strokeWidth="2" />
            <path d="M2 19l1-5 4 4z" fill="#f8d8a0" /><path d="M1.500 20l.8-3.500L5 19z" fill="#000" />
          </svg>
        </Btn>
        <Btn w="w-[39px]" off>
          <svg viewBox="0 0 28 30" className="h-[30px] w-7">
            <path d="M3 12l3 14c3 4 13 4 16 0l3-14z" fill="#d8d8d8" stroke="#000" />
            <path d="M4 14l14 14M8 13l14 11M14 13l10 6M24 14 10 28M20 13 6 24M14 13 4 19M12 28l12-11M16 28 4 16" stroke="#000" strokeWidth=".8" />
            <path d="M1 9c3-5 23-5 26 0 1 6-26 6-26 0z" fill="#ccc" stroke="#000" strokeWidth="1.300" />
            <path d="M5 9l2-6 7-1 2-1 3 4 3 5q-8 4-17-1z" fill="#e4e4e4" stroke="#000" strokeWidth=".8" />
            <path d="M14 2l4 8" stroke="#000" strokeWidth=".7" />
          </svg>
        </Btn>
      </Group>
      <div className={`${sep} mr-[6px] ml-[5px]`} />
      <Group title="Confirmação" w={61}>
        <Btn w="w-[39px]" off>
          <svg viewBox="0 0 26 28" className="h-7 w-[26px]">
            <path d="M0 0h26v28H2l-2-2z" fill="#000" />
            <path d="M5 1h16v14H5z" fill="#ccc" /><path d="M1 1h2v24H1zM23 6h2v20h-2z" fill="#808080" /><path d="M22 1h3v4h-3z" fill="#fff" />
            <path d="M3 16h20v2H3zM2 18h4v9H2z" fill="#808080" />
            <path d="M7 18h13v9H7z" fill="#000" /><path d="M16 19h4v8h-4z" fill="#ccc" />
          </svg>
        </Btn>
        <Btn w="w-[39px]" off>
          <svg viewBox="0 0 32 32" className="h-8 w-8">
            <path d="M10 .5h12l9.500 9.500v12L22 31.500H10L.5 22V10z" fill="#444" stroke="#222" />
            <path d="M10.500 2.500h11l8 8v11l-8 8h-11l-8-8v-11z" fill="#5a5a5a" stroke="#bbb" strokeWidth=".8" />
            <path d="M8 17V9q1.500-2 2.600 0l.6 6V6q1.500-2 3 0v8.500h.8V5q1.500-2 3 0v9.500h.8V7q1.500-2 3 0v11l2.500-2.500q3-1 2.500 1l-5 8q-2.500 4-7 4-5-1-6-9z" fill="#dadada" stroke="#333" strokeWidth=".7" />
            <path d="M12 20q4-2 8 0M12 23q4 0 6 3" stroke="#888" fill="none" strokeWidth=".8" />
          </svg>
        </Btn>
      </Group>
      <div className={`${sep} mr-[6px] ml-[5px]`} />
      <Group title="Impressão" w={50}>
        <div className="flex h-10 w-[121px] items-center border border-[#adadad] bg-[#e1e1e1]">
          <svg viewBox="0 0 28 24" className="ml-[46px] h-6 w-7">
            <path d="M6 21l18-9 3 1-2 5-13 6z" fill="#999" />
            <path d="M1 12 13 6l13 4v6l-14 7-11-4z" fill="#888" stroke="#555" strokeWidth=".8" />
            <path d="M1 12l11 4v7M12 16l14-6" fill="none" stroke="#555" strokeWidth=".8" />
            <path d="M1 12 13 6l13 4-14 6z" fill="#bdbdbd" />
            <path d="M12 10 18 1l7 1-6 10z" fill="#fff" stroke="#88a" strokeWidth=".6" />
            <path d="M18 3l4 1M17 5l4 1M15.500 7l4 1M15 9l3 1" stroke="#24f" />
            <path d="M5 11l3 1" stroke="#0a0" strokeWidth="1.500" /><path d="M8 13h2" stroke="#d00" />
          </svg>
          <div className="mr-[5px] ml-auto flex flex-col gap-[2px]">
            <div className="h-4 w-[15px] bg-white p-[1px]"><div className="h-[14px] w-[13px] border border-[#333]" /></div>
            <div className="h-4 w-[15px] bg-white p-[1px]"><div className="h-[14px] w-[13px] border border-[#333]" /></div>
          </div>
        </div>
        <Btn w="w-[66px]"><div className="flex flex-col items-center pt-[1px] text-[12px] leading-[13px]"><T w={50}>Assinatura</T><T w={48}>Eletrônica</T></div></Btn>
        <Btn w="w-[48px]"><T w={44} className="text-[12px] font-bold">Etiqueta</T></Btn>
        <Btn w="w-[48px]"><div className="flex flex-col items-center text-[12px] leading-[14px] font-bold"><T w={44}>Etiqueta</T><T w={39}>s/ soro</T></div></Btn>
      </Group>
      <div className="mt-[17px] ml-[72px] flex flex-col gap-1 text-[13px]">
        <div className="flex h-4 items-center gap-[6px]"><div className="h-[15px] w-[15px] rounded-full border border-black bg-[#808000]" /><T w={91}>Ponto de Pedido</T></div>
        <div className="flex h-4 items-center gap-[6px]"><div className="h-[15px] w-[15px] rounded-full border border-black bg-[#f00]" /><T w={83}>Saldo Negativo</T></div>
      </div>
      <div className="mt-[1px] ml-[4px] flex h-[55px] w-[55px] shrink-0 flex-col items-center rounded-full border border-[#a00010] bg-[#a6c8f0] pt-[13px] text-[12px] leading-[14px]">
        <T w={44}>Impresso</T>
        <span className="font-bold">S</span>
      </div>
      <div className="mt-[15px] ml-[118px] flex flex-col items-start">
        <T w={33} className="text-[13px] leading-4">Custo</T>
        <T w={42} className="text-[20px] leading-[26px]">0,00</T>
      </div>
      <div className="mt-[15px] mr-2 ml-auto flex gap-2">
        <Btn w="w-[103px]"><T w={94} className="text-[12px] font-bold">Etiqueta Paciente</T></Btn>
        <Btn w="w-[45px]"><T w={27} className="text-[12px] font-bold">Lista</T></Btn>
      </div>
    </div>
  );
}

function PageTabs() {
  const tabs: [string, string, number][] = [
    ["Lista Ultimas Saidas", "w-[138px] pl-[4px]", 128],
    ["Lista Pedidos", "w-[97px] pl-[6px]", 86],
    ["Prescrição Médica", "w-[129px] pl-[6px]", 117],
    ["Itens Pendentes", "w-[113px] pl-[6px]", 101],
    ["Aprazamento", "w-[95px] pl-[6px]", 86],
  ];
  return (
    <div className="flex h-[44px] items-start border-t border-[#dcdcdc] text-[14px] leading-4 font-bold">
      <div className="flex h-[42px] w-[52px] border-r border-l border-[#dcdcdc] pt-[14px] pl-[7px]"><T w={35}>Ficha</T></div>
      {tabs.map(([t, c, w]) => (
        <div key={t} className={`mt-[1px] flex h-10 border-t border-r border-[#dcdcdc] bg-[#f0f0f0] pt-[10px] ${c}`}><T w={w}>{t}</T></div>
      ))}
    </div>
  );
}

/* ---------- status and task bars ---------- */

function StatusBar() {
  return (
    <div className="flex h-[19px] border-t border-b border-t-[#949494] border-b-white bg-[#b3d8ec] font-['Liberation_Serif',serif] text-[13px] leading-[16px]">
      <T w={241} className="ml-[1px]">Usuário:202 DANILO DOS SANTOS BOMFIM</T>
      <T w={60} className="mt-[3px] ml-[134px]">Estoque nº 2</T>
      <T w={503} className="mr-[1px] ml-auto">HOSPITAL ESTADUAL 2 DE JULHO - CopyRight© Antonio Ribeiro dos Santos Jr. - Versão: 2.1.4.83</T>
    </div>
  );
}

function TaskBar() {
  return (
    <div className="flex h-10 items-center bg-[#1c2d3b] font-['Open_Sans',sans-serif] text-white">
      <div className="flex w-12 justify-center">
        <svg viewBox="0 0 16 16" className="h-4 w-4"><path d="M0 2.200 6.500 1.300V7.600H0zM7.300 1.200 16 0v7.600H7.300zM0 8.400h6.500v6.300L0 13.800zM7.300 8.400H16V16l-8.700-1.200z" fill="#fff" /></svg>
      </div>
      <div className="flex h-full w-[344px] items-center border border-r-0 border-[#b8b8b8] bg-[#f1f1f1] pl-[11px] text-[#383838]">
        <svg viewBox="0 0 17 17" className="h-[17px] w-[17px]"><circle cx="10.500" cy="6" r="5.300" fill="none" stroke="#222" strokeWidth="1.200" /><path d="M6.700 9.800.8 16" stroke="#222" strokeWidth="1.200" /></svg>
        <T w={175} className="ml-[11px] text-[15px]">Digite aqui para pesquisar</T>
        <svg viewBox="0 0 77 34" className="ml-auto h-[34px] w-[77px] self-end">
          <path d="M0 28q20-3 38 0v6H0z" fill="#5f9e2f" /><path d="M4 31h30" stroke="#c8e89a" strokeWidth="2" />
          <path d="M2 20h34v8H2z" fill="#e9b45a" /><path d="M7 21h24l-2 5H9z" fill="#f08a80" /><path d="M3 27h32" stroke="#fff0c8" />
          <path d="M14 5l3 3q7-4 10 4l4 5-5 3q-9 2-11-3z" fill="#2b93e0" /><path d="M15 14q5 4 10-1" fill="#1565b0" /><path d="M16 9l-3 2 3 1z" fill="#f6a21c" />
          <rect x="37" y="9" width="4" height="25" fill="#3f86d8" /><path d="M37 14h4M37 28h4" stroke="#cfe4ff" />
          <rect x="41" y="3" width="10" height="31" rx="1" fill="#d8649c" /><path d="M42 9h8M42 13h8M42 27h8" stroke="#ffd0e6" strokeWidth="1.500" />
          <rect x="51" y="0" width="9" height="34" rx="1" fill="#9065c8" /><path d="M51 0h9v8h-9zM52 26h7v6h-7z" fill="#f0c850" /><circle cx="55.500" cy="4" r="1.700" fill="#7040b0" />
          <rect x="60" y="4" width="7" height="30" fill="#b4602c" /><path d="M60 9h7M60 13h7M60 28h7" stroke="#f5c890" strokeWidth="1.500" />
          <rect x="67" y="0" width="10" height="34" rx="1" fill="#2e7d46" /><path d="M68 6h8M68 10h8M68 28h8" stroke="#bfe3b0" strokeWidth="1.500" />
        </svg>
      </div>
      <svg viewBox="0 0 17 16" className="ml-4 h-4 w-[17px]"><path d="M1 0v3h9V0M1 16v-3h9v3M1 5.500h9v5H1zM13.500 0v4M13.500 10v6" fill="none" stroke="#fff" strokeWidth="1.300" /><rect x="12" y="5" width="3" height="3" fill="#fff" /></svg>
      <svg viewBox="0 0 24 24" className="ml-[30px] h-6 w-6">
        <circle cx="12" cy="12" r="12" fill="#1b78d0" />
        <path d="M1 8C4-2 20-3 23.500 9c1 6-5 8-9 6 2-3 0-7-4-7-4-1-8 0-9.500 3z" fill="#35b8d0" />
        <path d="M13 .5c7 1 11 6 10.800 11.500-.8 4-6 5-9.300 3 1-1.500 1-3.500-.5-5 3-3 2-7-1-9.500z" fill="#5fdc6a" />
        <path d="M8 12c-2 6 3 11 9 11-9 3-16-3-16-10 0-5 7-6 10-4-1 0-2 1-3 3z" fill="#0d55a8" />
        <path d="M11 12c-.5 4 5 7 11 4-2 3-11 4-11-4z" fill="#1c2d3b" />
      </svg>
      <svg viewBox="0 0 22 20" className="ml-[26px] h-5 w-[22px]"><path d="M0 1h8l2 2h12v15H0z" fill="#e8a317" /><path d="M0 5h22v13H0z" fill="#ffd25e" /><path d="M4 20v-6q0-3 3-3h8q3 0 3 3v6h-4v-4H8v4z" fill="#3c8fd8" /></svg>
      <svg viewBox="0 0 24 24" className="ml-[26px] h-6 w-6"><path d="M7 7V3q0-1.500 1.500-1.500h7Q17 1.500 17 3v4" fill="none" stroke="#27aee8" strokeWidth="2" /><path d="M0 6h24v15q0 3-3 3H3q-3 0-3-3z" fill="#f6f6f6" /><path d="M7.500 10h4v4h-4z" fill="#f25022" /><path d="M12.500 10h4v4h-4z" fill="#7fba00" /><path d="M7.500 15h4v4h-4z" fill="#00a4ef" /><path d="M12.500 15h4v4h-4z" fill="#ffb900" /></svg>
      <svg viewBox="0 0 24 24" className="ml-[25px] h-6 w-6"><path d="M0 8 12 1l12 7v3H0z" fill="#0f5fae" /><path d="M2 8h20l-4 8H6z" fill="#fff" /><path d="M0 9l12 7 12-7v14H0z" fill="#30a5ea" /><path d="M0 23 12 14l12 9z" fill="#4fc3f7" /></svg>
      <div className="ml-[13px] flex h-full w-[45px] flex-col items-center border-b-2 border-[#76b9ed] bg-[#4b5965] pt-2 pl-[2px]"><AppLogo className="h-6 w-6" /></div>
      <div className="ml-[1px] h-full w-[3px] border-b-2 border-[#76b9ed] bg-[#414f5b]" />

      <svg viewBox="0 0 24 16" className="ml-auto h-4 w-6"><path d="M1 1h19v14H3q-2 0-2-2zM20 4h3v9q0 2-2 2" fill="none" stroke="#fff" strokeWidth="1.600" /><path d="M4 4.500h13M12 8h5M12 11.500h5" stroke="#fff" strokeWidth="1.500" /><rect x="4.500" y="7.500" width="5" height="4.500" fill="none" stroke="#fff" strokeWidth="1.300" /></svg>
      <svg viewBox="0 0 12 7" className="ml-[26px] h-[7px] w-3"><path d="M.6 6.400 6 1l5.400 5.400" fill="none" stroke="#fff" strokeWidth="1.200" /></svg>
      <svg viewBox="0 0 17 17" className="ml-[10px] h-[17px] w-[17px]"><path d="M9 15.500A7.500 7.500 0 1115.500 8M8 .5C3 4 3 12 8 15.500M8 .5c2.500 2 3.500 4 3.500 7M1 5h14M1 11h7M8 .5V15" fill="none" stroke="#fff" /><circle cx="12.500" cy="12.500" r="3.500" fill="none" stroke="#fff" /><path d="M10 10l5 5" stroke="#fff" /></svg>
      <svg viewBox="0 0 17 14" className="ml-[7px] h-[14px] w-[17px]"><path d="M1 5v4h2.500L7 12V2L3.500 5zM9 5q1.500 2 0 4M11.500 3q3 4 0 8M14 1q4 6 0 12" fill="none" stroke="#fff" strokeWidth="1.100" /></svg>
      <div className="ml-[8px] flex w-[27px] flex-col items-center text-[11px] leading-[17px]"><T w={23}>POR</T><T w={26}>PTB2</T></div>
      <div className="ml-[10px] flex w-[59px] flex-col items-center text-[11px] leading-[17px]"><T w={28}>09:34</T><T w={59}>02/04/2024</T></div>
      <div className="relative mr-[12px] ml-[17px] h-6 w-6">
        <svg viewBox="0 0 24 24" className="h-6 w-6"><path d="M0 0h16v13H7l-3 3v-3H0z" fill="#fff" /><path d="M3 3.500h10M3 6.500h10M3 9.500h7" stroke="#1c2d3b" strokeWidth="1.200" /><circle cx="15" cy="15" r="8" fill="#3b4650" stroke="#8d969d" /></svg>
        <span className="absolute top-[7px] left-[12px] text-[11px] leading-4 font-bold">3</span>
      </div>
      <div className="mr-1 h-full w-px bg-[#6d7780]" />
    </div>
  );
}

export default function App() {
  return (
    <div className="relative flex h-[1080px] w-[1920px] flex-col overflow-hidden bg-white font-['Liberation_Sans',Arial,sans-serif] text-black">
      <Header />
      <div className="flex h-[895px] border-t border-l border-t-[#d9d9d9] border-l-[#dcdcdc]">
        <div className="-ml-[1px] min-w-0 flex-1 pt-[3px]">
          <div className="-mr-[3px]">
            <NumberBar />
            <OrderBox />
            <Attendance />
            <div className="h-[4px]" />
            <ItemsGrid />
            <InnerTabs />
            <ToolBar />
          </div>
        </div>
        <div className="h-full w-[3px] border-l border-[#d9d9d9] bg-[#f0f0f0]" />
      </div>
      <PageTabs />
      <StatusBar />
      <TaskBar />
      <div className="absolute top-[347px] right-0 h-[324px] w-[5px] rounded-tl-[5px] bg-[#7eb0ea]" />
    </div>
  );
}
